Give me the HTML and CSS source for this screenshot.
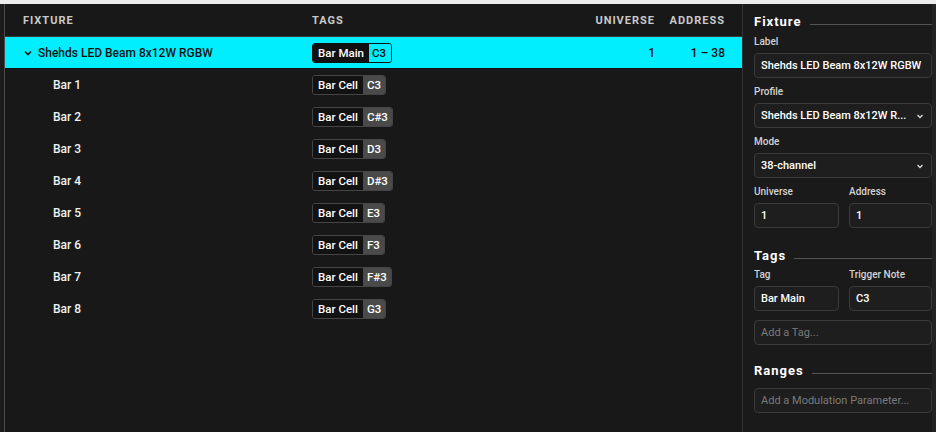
FILE: index.html
```html
<!DOCTYPE html>
<html>
<head>
<meta charset="utf-8">
<link rel="stylesheet" href="styles.css">
</head>
<body>
<div class="topstrip"></div>
<div class="app">
  <div class="gutter"></div>
  <main class="main">
    <div class="row head">
      <div class="c-fix">FIXTURE</div>
      <div class="c-tags">TAGS</div>
      <div class="c-uni">UNIVERSE</div>
      <div class="c-addr">ADDRESS</div>
    </div>
    <div class="row sel">
      <div class="c-fix"><svg class="chev" width="10" height="10" viewBox="0 0 10 10"><path d="M2 3.5 L5 6.5 L8 3.5" fill="none" stroke="#111" stroke-width="1.6"/></svg><span>Shehds LED Beam 8x12W RGBW</span></div>
      <div class="c-tags"><div class="pill pill-sel"><span class="pl">Bar Main</span><span class="pn">C3</span></div></div>
      <div class="c-uni">1</div>
      <div class="c-addr">1 &ndash; 38</div>
    </div>
    <div class="row child"><div class="c-fix">Bar 1</div><div class="c-tags"><div class="pill"><span class="pl">Bar Cell</span><span class="pn">C3</span></div></div></div>
    <div class="row child"><div class="c-fix">Bar 2</div><div class="c-tags"><div class="pill"><span class="pl">Bar Cell</span><span class="pn">C#3</span></div></div></div>
    <div class="row child"><div class="c-fix">Bar 3</div><div class="c-tags"><div class="pill"><span class="pl">Bar Cell</span><span class="pn">D3</span></div></div></div>
    <div class="row child"><div class="c-fix">Bar 4</div><div class="c-tags"><div class="pill"><span class="pl">Bar Cell</span><span class="pn">D#3</span></div></div></div>
    <div class="row child"><div class="c-fix">Bar 5</div><div class="c-tags"><div class="pill"><span class="pl">Bar Cell</span><span class="pn">E3</span></div></div></div>
    <div class="row child"><div class="c-fix">Bar 6</div><div class="c-tags"><div class="pill"><span class="pl">Bar Cell</span><span class="pn">F3</span></div></div></div>
    <div class="row child"><div class="c-fix">Bar 7</div><div class="c-tags"><div class="pill"><span class="pl">Bar Cell</span><span class="pn">F#3</span></div></div></div>
    <div class="row child"><div class="c-fix">Bar 8</div><div class="c-tags"><div class="pill"><span class="pl">Bar Cell</span><span class="pn">G3</span></div></div></div>
  </main>
  <aside class="side">
    <div class="sec-title"><span>Fixture</span><i></i></div>
    <div class="lbl">Label</div>
    <div class="field">Shehds LED Beam 8x12W RGBW</div>
    <div class="lbl">Profile</div>
    <div class="field select"><span>Shehds LED Beam 8x12W R...</span><svg width="10" height="10" viewBox="0 0 10 10"><path d="M2.5 4 L5 6.5 L7.5 4" fill="none" stroke="#ddd" stroke-width="1.3"/></svg></div>
    <div class="lbl">Mode</div>
    <div class="field select"><span>38-channel</span><svg width="10" height="10" viewBox="0 0 10 10"><path d="M2.5 4 L5 6.5 L7.5 4" fill="none" stroke="#ddd" stroke-width="1.3"/></svg></div>
    <div class="pair">
      <div class="col"><div class="lbl">Universe</div><div class="field">1</div></div>
      <div class="col"><div class="lbl">Address</div><div class="field">1</div></div>
    </div>
    <div class="sec-title t2"><span>Tags</span><i></i></div>
    <div class="pair">
      <div class="col"><div class="lbl">Tag</div><div class="field">Bar Main</div></div>
      <div class="col"><div class="lbl">Trigger Note</div><div class="field">C3</div></div>
    </div>
    <div class="field ph mt">Add a Tag...</div>
    <div class="sec-title t3"><span>Ranges</span><i></i></div>
    <div class="field ph">Add a Modulation Parameter...</div>
  </aside>
  <div class="scroll"></div>
</div>
</body>
</html>
```
FILE: styles.css
```css
* { box-sizing: border-box; }
html, body { margin: 0; padding: 0; }
body {
  width: 936px; height: 432px; overflow: hidden;
  background: #181818;
  font-family: Roboto, "Liberation Sans", sans-serif;
  color: #f2f2f2;
}
.topstrip { height: 4px; background: #ececec; }
.app { display: flex; width: 936px; height: 428px; overflow: hidden; }
.gutter { width: 5px; flex-shrink: 0; background: #1c1c1c; border-right: 1px solid #4a4a4a; }
.main { width: 738px; min-width: 0; flex-shrink: 0; overflow: hidden; background: #181818; border-right: 1px solid #333; }
.row {
  display: flex;
  align-items: center;
  height: 32px;
  padding: 0 17px 0 18px;
  font-size: 12px;
}
.c-fix { width: 289px; flex-shrink: 0; }
.c-tags { flex: 1; min-width: 0; display: flex; align-items: center; }
.c-uni { width: 80px; text-align: right; flex-shrink: 0; }
.c-addr { width: 70px; text-align: right; flex-shrink: 0; }
.head { border-bottom: 1px solid #3a3a3a; height: 33px; }
.head > div { font-size: 11px; font-weight: 700; letter-spacing: 1px; color: #c9c9c9; }
.sel { background: #00eeff; color: #111; font-weight: 500; border-bottom: 1px solid #111; }
.sel .c-fix { display: flex; align-items: center; }
.chev { margin-right: 5px; flex-shrink: 0; }
.child .c-fix { padding-left: 30px; font-weight: 500; }
.pill {
  display: flex; height: 20px; border: 1px solid #444; border-radius: 3px; overflow: hidden;
  font-size: 11.5px; font-weight: 500; line-height: 18px;
}
.pill .pl { background: #121212; color: #fff; padding: 0 5px; }
.pill .pn { background: #4a4a4a; color: #fff; padding: 0 4px; }
.pill-sel { border-color: #111; }
.pill-sel .pl { background: #111; }
.pill-sel .pn { background: #00eeff; color: #111; padding: 0 5px 0 3px; }
.side { width: 189px; flex-shrink: 0; padding: 10px 0 0 11px; background: #1a1a1a; overflow: hidden; }
.scroll { width: 4px; flex-shrink: 0; background: #232323; }
.sec-title { display: flex; align-items: center; font-size: 13px; font-weight: 700; letter-spacing: 1px; color: #fff; height: 14px; margin-bottom: 8px; }
.sec-title i { flex: 1; border-bottom: 1px solid #555; margin-left: 8px; margin-top: 6px; }
.sec-title.t2 { margin-top: 20px; margin-bottom: 7px; }
.sec-title.t3 { margin-top: 18px; margin-bottom: 11px; }
.lbl { font-size: 10px; font-weight: 500; color: #d2d2d2; height: 12px; line-height: 12px; margin-bottom: 5px; }
.field {
  height: 25px; border: 1px solid #3a3a3a; border-radius: 4px; background: #1e1e1e;
  font-size: 11px; font-weight: 500; color: #fff; line-height: 23px; padding: 0 6px;
  margin-bottom: 8px; white-space: nowrap; overflow: hidden;
}
.select { display: flex; justify-content: space-between; align-items: center; }
.pair { display: flex; gap: 10px; }
.pair .col:first-child { width: 85px; }
.pair .col:last-child { width: 83px; }
.pair .field { margin-bottom: 0; }
.mt { margin-top: 9px; }
.ph { color: #7a7a7a; font-weight: 400; }
```
